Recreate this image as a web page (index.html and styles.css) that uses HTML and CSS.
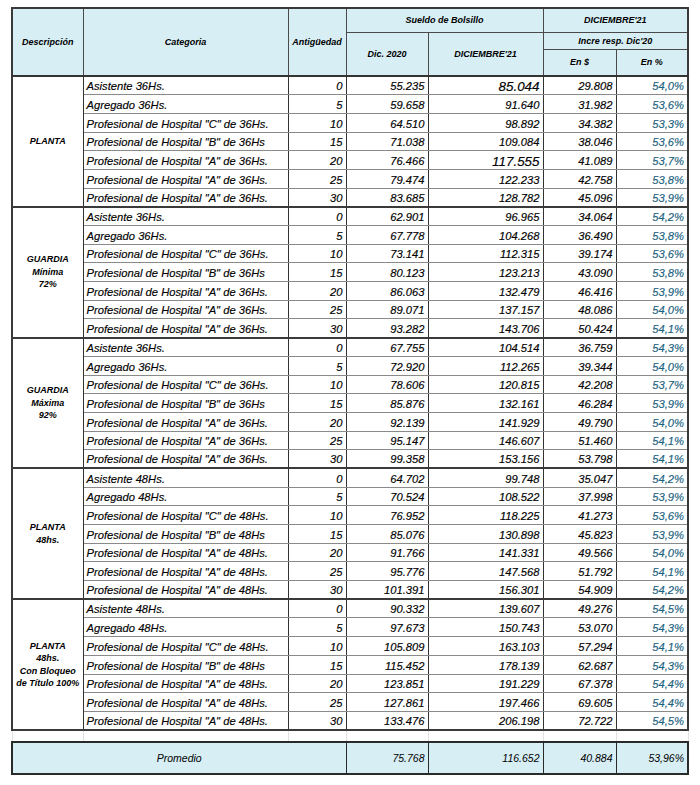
FILE: index.html
```html
<!DOCTYPE html>
<html lang="es">
<head>
<meta charset="utf-8">
<title>Sueldo de Bolsillo</title>
<link rel="stylesheet" href="styles.css">
</head>
<body>
<table class="grid">
  <colgroup>
    <col class="c-desc"><col class="c-cat"><col class="c-ant"><col class="c-d20"><col class="c-d21"><col class="c-inc"><col class="c-pct">
  </colgroup>
  <thead>
    <tr class="h1">
      <th rowspan="3" class="hd">Descripción</th>
      <th rowspan="3" class="hd">Categoria</th>
      <th rowspan="3" class="hd">Antigüedad</th>
      <th colspan="2" class="hd">Sueldo de Bolsillo</th>
      <th colspan="2" class="hd">DICIEMBRE'21</th>
    </tr>
    <tr class="h2">
      <th rowspan="2" class="hd">Dic. 2020</th>
      <th rowspan="2" class="hd">DICIEMBRE'21</th>
      <th colspan="2" class="hd">Incre resp. Dic'20</th>
    </tr>
    <tr class="h3">
      <th class="hd">En $</th>
      <th class="hd">En %</th>
    </tr>
  </thead>
  <tbody class="sec">
    <tr class="first"><td rowspan="7" class="lbl">PLANTA</td><td class="cat">Asistente 36Hs.</td><td class="num">0</td><td class="num">55.235</td><td class="num big">85.044</td><td class="num">29.808</td><td class="pct">54,0%</td></tr>
    <tr><td class="cat">Agregado 36Hs.</td><td class="num">5</td><td class="num">59.658</td><td class="num">91.640</td><td class="num">31.982</td><td class="pct">53,6%</td></tr>
    <tr><td class="cat">Profesional de Hospital "C" de 36Hs.</td><td class="num">10</td><td class="num">64.510</td><td class="num">98.892</td><td class="num">34.382</td><td class="pct">53,3%</td></tr>
    <tr><td class="cat">Profesional de Hospital "B" de 36Hs</td><td class="num">15</td><td class="num">71.038</td><td class="num">109.084</td><td class="num">38.046</td><td class="pct">53,6%</td></tr>
    <tr><td class="cat">Profesional de Hospital "A" de 36Hs.</td><td class="num">20</td><td class="num">76.466</td><td class="num big">117.555</td><td class="num">41.089</td><td class="pct">53,7%</td></tr>
    <tr><td class="cat">Profesional de Hospital "A" de 36Hs.</td><td class="num">25</td><td class="num">79.474</td><td class="num">122.233</td><td class="num">42.758</td><td class="pct">53,8%</td></tr>
    <tr class="last"><td class="cat">Profesional de Hospital "A" de 36Hs.</td><td class="num">30</td><td class="num">83.685</td><td class="num">128.782</td><td class="num">45.096</td><td class="pct">53,9%</td></tr>
  </tbody>
  <tbody class="sec">
    <tr class="first"><td rowspan="7" class="lbl">GUARDIA<br>Mínima<br>72%</td><td class="cat">Asistente 36Hs.</td><td class="num">0</td><td class="num">62.901</td><td class="num">96.965</td><td class="num">34.064</td><td class="pct">54,2%</td></tr>
    <tr><td class="cat">Agregado 36Hs.</td><td class="num">5</td><td class="num">67.778</td><td class="num">104.268</td><td class="num">36.490</td><td class="pct">53,8%</td></tr>
    <tr><td class="cat">Profesional de Hospital "C" de 36Hs.</td><td class="num">10</td><td class="num">73.141</td><td class="num">112.315</td><td class="num">39.174</td><td class="pct">53,6%</td></tr>
    <tr><td class="cat">Profesional de Hospital "B" de 36Hs</td><td class="num">15</td><td class="num">80.123</td><td class="num">123.213</td><td class="num">43.090</td><td class="pct">53,8%</td></tr>
    <tr><td class="cat">Profesional de Hospital "A" de 36Hs.</td><td class="num">20</td><td class="num">86.063</td><td class="num">132.479</td><td class="num">46.416</td><td class="pct">53,9%</td></tr>
    <tr><td class="cat">Profesional de Hospital "A" de 36Hs.</td><td class="num">25</td><td class="num">89.071</td><td class="num">137.157</td><td class="num">48.086</td><td class="pct">54,0%</td></tr>
    <tr class="last"><td class="cat">Profesional de Hospital "A" de 36Hs.</td><td class="num">30</td><td class="num">93.282</td><td class="num">143.706</td><td class="num">50.424</td><td class="pct">54,1%</td></tr>
  </tbody>
  <tbody class="sec">
    <tr class="first"><td rowspan="7" class="lbl">GUARDIA<br>Máxima<br>92%</td><td class="cat">Asistente 36Hs.</td><td class="num">0</td><td class="num">67.755</td><td class="num">104.514</td><td class="num">36.759</td><td class="pct">54,3%</td></tr>
    <tr><td class="cat">Agregado 36Hs.</td><td class="num">5</td><td class="num">72.920</td><td class="num">112.265</td><td class="num">39.344</td><td class="pct">54,0%</td></tr>
    <tr><td class="cat">Profesional de Hospital "C" de 36Hs.</td><td class="num">10</td><td class="num">78.606</td><td class="num">120.815</td><td class="num">42.208</td><td class="pct">53,7%</td></tr>
    <tr><td class="cat">Profesional de Hospital "B" de 36Hs</td><td class="num">15</td><td class="num">85.876</td><td class="num">132.161</td><td class="num">46.284</td><td class="pct">53,9%</td></tr>
    <tr><td class="cat">Profesional de Hospital "A" de 36Hs.</td><td class="num">20</td><td class="num">92.139</td><td class="num">141.929</td><td class="num">49.790</td><td class="pct">54,0%</td></tr>
    <tr><td class="cat">Profesional de Hospital "A" de 36Hs.</td><td class="num">25</td><td class="num">95.147</td><td class="num">146.607</td><td class="num">51.460</td><td class="pct">54,1%</td></tr>
    <tr class="last"><td class="cat">Profesional de Hospital "A" de 36Hs.</td><td class="num">30</td><td class="num">99.358</td><td class="num">153.156</td><td class="num">53.798</td><td class="pct">54,1%</td></tr>
  </tbody>
  <tbody class="sec">
    <tr class="first"><td rowspan="7" class="lbl">PLANTA<br>48hs.</td><td class="cat">Asistente 48Hs.</td><td class="num">0</td><td class="num">64.702</td><td class="num">99.748</td><td class="num">35.047</td><td class="pct">54,2%</td></tr>
    <tr><td class="cat">Agregado 48Hs.</td><td class="num">5</td><td class="num">70.524</td><td class="num">108.522</td><td class="num">37.998</td><td class="pct">53,9%</td></tr>
    <tr><td class="cat">Profesional de Hospital "C" de 48Hs.</td><td class="num">10</td><td class="num">76.952</td><td class="num">118.225</td><td class="num">41.273</td><td class="pct">53,6%</td></tr>
    <tr><td class="cat">Profesional de Hospital "B" de 48Hs</td><td class="num">15</td><td class="num">85.076</td><td class="num">130.898</td><td class="num">45.823</td><td class="pct">53,9%</td></tr>
    <tr><td class="cat">Profesional de Hospital "A" de 48Hs.</td><td class="num">20</td><td class="num">91.766</td><td class="num">141.331</td><td class="num">49.566</td><td class="pct">54,0%</td></tr>
    <tr><td class="cat">Profesional de Hospital "A" de 48Hs.</td><td class="num">25</td><td class="num">95.776</td><td class="num">147.568</td><td class="num">51.792</td><td class="pct">54,1%</td></tr>
    <tr class="last"><td class="cat">Profesional de Hospital "A" de 48Hs.</td><td class="num">30</td><td class="num">101.391</td><td class="num">156.301</td><td class="num">54.909</td><td class="pct">54,2%</td></tr>
  </tbody>
  <tbody class="sec">
    <tr class="first"><td rowspan="7" class="lbl">PLANTA<br>48hs.<br>Con Bloqueo<br>de Título 100%</td><td class="cat">Asistente 48Hs.</td><td class="num">0</td><td class="num">90.332</td><td class="num">139.607</td><td class="num">49.276</td><td class="pct">54,5%</td></tr>
    <tr><td class="cat">Agregado 48Hs.</td><td class="num">5</td><td class="num">97.673</td><td class="num">150.743</td><td class="num">53.070</td><td class="pct">54,3%</td></tr>
    <tr><td class="cat">Profesional de Hospital "C" de 48Hs.</td><td class="num">10</td><td class="num">105.809</td><td class="num">163.103</td><td class="num">57.294</td><td class="pct">54,1%</td></tr>
    <tr><td class="cat">Profesional de Hospital "B" de 48Hs</td><td class="num">15</td><td class="num">115.452</td><td class="num">178.139</td><td class="num">62.687</td><td class="pct">54,3%</td></tr>
    <tr><td class="cat">Profesional de Hospital "A" de 48Hs.</td><td class="num">20</td><td class="num">123.851</td><td class="num">191.229</td><td class="num">67.378</td><td class="pct">54,4%</td></tr>
    <tr><td class="cat">Profesional de Hospital "A" de 48Hs.</td><td class="num">25</td><td class="num">127.861</td><td class="num">197.466</td><td class="num">69.605</td><td class="pct">54,4%</td></tr>
    <tr class="last"><td class="cat">Profesional de Hospital "A" de 48Hs.</td><td class="num">30</td><td class="num">133.476</td><td class="num">206.198</td><td class="num">72.722</td><td class="pct">54,5%</td></tr>
  </tbody>
  <tbody class="foot">
    <tr class="gap"><td></td><td></td><td></td><td></td><td></td><td></td><td></td></tr>
    <tr class="avg"><td colspan="3" class="avg-lbl">Promedio</td><td class="avg-num">75.768</td><td class="avg-num">116.652</td><td class="avg-num">40.884</td><td class="avg-num">53,96%</td></tr>
  </tbody>
</table>
</body>
</html>
```

FILE: styles.css
```css
html, body {
  margin: 0;
  padding: 0;
  background: #ffffff;
}

body {
  font-family: "Liberation Sans", Arial, sans-serif;
  color: #000;
}

.grid {
  margin: 7px 0 0 11px;
  border-collapse: collapse;
  table-layout: fixed;
  width: 676px;
}

.c-desc { width: 71px; }
.c-cat { width: 205px; }
.c-ant { width: 58px; }
.c-d20 { width: 82px; }
.c-d21 { width: 115px; }
.c-inc { width: 73px; }
.c-pct { width: 72px; }

.hd {
  background: #d7eef5;
  border: 1px solid #4a4a4a;
  font-size: 9px;
  font-weight: bold;
  font-style: italic;
  text-align: center;
  vertical-align: middle;
  padding: 0;
  color: #000;
}

.h1 { height: 24px; }
.h2 { height: 17px; }
.h3 { height: 27px; }

thead .h1 .hd { border-top: 2px solid #3a3a3a; }
thead .h1 .hd:first-child { border-left: 2px solid #3a3a3a; }
thead .h1 .hd:last-child,
thead .h2 .hd:last-child,
thead .h3 .hd:last-child { border-right: 2px solid #3a3a3a; }
thead tr:last-child .hd,
thead .hd[rowspan="3"],
thead .hd[rowspan="2"] { border-bottom: 2px solid #333; }

.sec tr { height: 18.7px; }

.sec td {
  border-left: 1px solid #333;
  border-right: 1px solid #333;
  border-bottom: 1px solid #8a8a8a;
  padding: 0 3px 1px 3px;
  vertical-align: bottom;
  font-style: italic;
  font-size: 11.2px;
  line-height: 13px;
  white-space: nowrap;
  overflow: hidden;
  -webkit-text-stroke: 0.15px currentColor;
}

.sec tr.last td,
.sec td.lbl {
  border-bottom: 2px solid #3a3a3a;
}

.sec td.lbl {
  border-left: 2px solid #3a3a3a;
  text-align: center;
  vertical-align: middle;
  font-weight: bold;
  font-size: 9px;
  line-height: 12.5px;
  padding: 0;
  -webkit-text-stroke: 0;
}

.sec td.pct {
  border-right: 2px solid #3a3a3a;
  text-align: right;
  color: #1b6280;
}

.cat {
  text-align: left;
}

.num {
  text-align: right;
}

.num.big {
  font-size: 13.4px;
}

.gap { height: 12px; }

.gap td {
  border-left: 1px solid #e2e2e2;
  border-right: 1px solid #e2e2e2;
  border-bottom: 1px solid #e8e8e8;
  padding: 0;
}

.avg { height: 32px; }

.avg td {
  background: #d7eef5;
  border: 2px solid #2a2a2a;
  border-left-width: 1px;
  border-right-width: 1px;
  font-style: italic;
  font-size: 10.5px;
  vertical-align: middle;
  padding: 0 3px;
}

.avg td:first-child { border-left-width: 2px; }
.avg td:last-child { border-right-width: 2px; }

.avg-lbl {
  text-align: center;
}

.avg-num {
  text-align: right;
}
```
